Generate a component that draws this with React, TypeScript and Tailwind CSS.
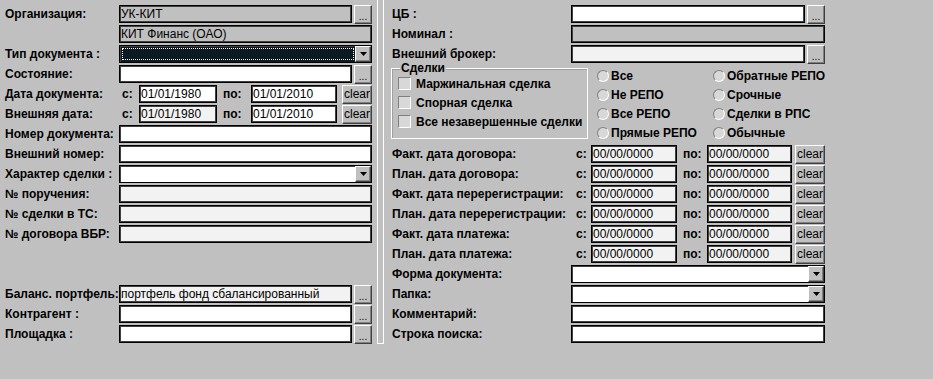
import type { ReactNode } from "react";

// серые поля/кнопки в стиле старого Windows-клиента
const FONT = "font-['Liberation_Sans',Arial,sans-serif]";

function Box({
  tone = "white",
  className = "",
  children,
}: {
  tone?: "white" | "light" | "gray";
  className?: string;
  children?: ReactNode;
}) {
  const bg =
    tone === "white" ? "bg-white" : tone === "light" ? "bg-[#f2f2f2]" : "bg-[#c0c0c0]";
  return (
    <div
      className={`flex h-[18px] shrink-0 items-center overflow-hidden whitespace-nowrap border border-black pl-[1px] text-[12px] leading-none shadow-[inset_1px_1px_0_#404040,inset_-1px_-1px_0_#404040] ${bg} ${className}`}
    >
      {children}
    </div>
  );
}

function Btn({ className = "", children }: { className?: string; children: ReactNode }) {
  return (
    <div
      className={`flex shrink-0 items-center justify-center border border-b-[#404040] border-l-white border-r-[#404040] border-t-white bg-[#c0c0c0] text-[12px] leading-none shadow-[inset_-1px_-1px_0_#808080] ${className}`}
    >
      {children}
    </div>
  );
}

function Dots() {
  return (
    <Btn className="ml-[2px] h-[19px] w-[18px]">
      <span className="pt-[5px] text-[10px]">...</span>
    </Btn>
  );
}

function Arrow() {
  return (
    <div className="flex h-[16px] w-[16px] items-center justify-center border border-b-[#404040] border-l-white border-r-[#404040] border-t-white bg-[#c0c0c0] shadow-[inset_-1px_-1px_0_#808080]">
      <svg width="7" height="4" viewBox="0 0 7 4">
        <path d="M0 0h7L3.5 4z" fill="#000" />
      </svg>
    </div>
  );
}

function Select({ dark = false, className = "" }: { dark?: boolean; className?: string }) {
  return (
    <div
      className={`flex h-[18px] shrink-0 items-center justify-between border border-black shadow-[inset_1px_1px_0_#404040] ${
        dark ? "bg-[#0b1a20]" : "bg-white"
      } ${className}`}
    >
      {dark ? (
        <div className="ml-[2px] mr-[1px] h-[12px] flex-1 border border-dotted border-white" />
      ) : (
        <div />
      )}
      <Arrow />
    </div>
  );
}

function Row({ label, lw, children }: { label: string; lw: string; children: ReactNode }) {
  return (
    <div className="flex h-[20px] items-center">
      <div className={`shrink-0 whitespace-nowrap text-[12px] font-bold leading-none ${lw}`}>
        {label}
      </div>
      {children}
    </div>
  );
}

function DateLeft({ label, from, fromTone }: { label: string; from: string; fromTone: "white" | "light" }) {
  return (
    <Row label={label} lw="w-[114px]">
      <span className="w-[20px] pl-[3px] text-[12px] font-bold">с:</span>
      <Box tone={fromTone} className="w-[78px]">
        {from}
      </Box>
      <span className="w-[34px] pl-[6px] text-[12px] font-bold">по:</span>
      <Box className="w-[86px]">01/01/2010</Box>
      <Btn className="ml-[5px] h-[19px] w-[30px]">clear</Btn>
    </Row>
  );
}

function DateRight({ label }: { label: string }) {
  return (
    <Row label={label} lw="w-[179px]">
      <span className="w-[20px] pl-[5px] text-[12px] font-bold">с:</span>
      <Box tone="light" className="w-[86px]">
        00/00/0000
      </Box>
      <span className="w-[30px] pl-[6px] text-[12px] font-bold">по:</span>
      <Box tone="light" className="w-[85px]">
        00/00/0000
      </Box>
      <Btn className="ml-[3px] h-[19px] w-[30px]">clear</Btn>
    </Row>
  );
}

function Check({ label }: { label: string }) {
  return (
    <div className="flex h-[19px] items-center">
      <div className="h-[13px] w-[13px] shrink-0 border border-b-white border-l-[#808080] border-r-white border-t-[#808080] bg-[#d8d8d8]" />
      <span className="ml-[5px] whitespace-nowrap text-[12px] font-bold leading-none">{label}</span>
    </div>
  );
}

function Radio({ label }: { label: string }) {
  return (
    <div className="flex h-[19px] items-center">
      <div className="h-[12px] w-[12px] shrink-0 rounded-full border border-b-white border-l-[#808080] border-r-white border-t-[#808080] bg-[#d8d8d8]" />
      <span className="ml-[2px] whitespace-nowrap text-[12px] font-bold leading-none">{label}</span>
    </div>
  );
}

export default function App() {
  return (
    <div className={`flex h-[379px] w-[933px] bg-[#c0c0c0] text-black ${FONT}`}>
      {/* левая колонка */}
      <div className="w-[373px] shrink-0 pl-[5px] pt-[4px]">
        <Row label="Организация:" lw="w-[114px]">
          <Box tone="gray" className="w-[233px]">
            УК-КИТ
          </Box>
          <Dots />
        </Row>
        <Row label="" lw="w-[114px]">
          <Box tone="gray" className="w-[253px]">
            КИТ Финанс (ОАО)
          </Box>
        </Row>
        <Row label="Тип документа :" lw="w-[114px]">
          <Select dark className="w-[253px]" />
        </Row>
        <Row label="Состояние:" lw="w-[114px]">
          <Box className="w-[233px]" />
          <Dots />
        </Row>
        <DateLeft label="Дата документа:" from="01/01/1980" fromTone="white" />
        <DateLeft label="Внешняя дата:" from="01/01/1980" fromTone="light" />
        <Row label="Номер документа:" lw="w-[114px]">
          <Box className="w-[253px]" />
        </Row>
        <Row label="Внешний номер:" lw="w-[114px]">
          <Box className="w-[253px]" />
        </Row>
        <Row label="Характер сделки :" lw="w-[114px]">
          <Select className="w-[253px]" />
        </Row>
        <Row label="№ поручения:" lw="w-[114px]">
          <Box tone="light" className="w-[253px]" />
        </Row>
        <Row label="№ сделки в ТС:" lw="w-[114px]">
          <Box tone="light" className="w-[253px]" />
        </Row>
        <Row label="№ договора ВБР:" lw="w-[114px]">
          <Box tone="light" className="w-[253px]" />
        </Row>
        <div className="h-[40px]" />
        <Row label="Баланс. портфель:" lw="w-[114px]">
          <Box tone="light" className="w-[233px]">
            портфель фонд сбалансированный
          </Box>
          <Dots />
        </Row>
        <Row label="Контрагент :" lw="w-[114px]">
          <Box className="w-[233px]" />
          <Dots />
        </Row>
        <Row label="Площадка :" lw="w-[114px]">
          <Box className="w-[233px]" />
          <Dots />
        </Row>
      </div>

      {/* разделитель */}
      <div className="ml-[4px] h-[344px] w-[7px] shrink-0 border-b border-l border-r border-white" />

      {/* правая колонка */}
      <div className="pl-[8px] pt-[4px]">
        <Row label="ЦБ :" lw="w-[179px]">
          <Box className="w-[234px]" />
          <Dots />
        </Row>
        <Row label="Номинал :" lw="w-[179px]">
          <Box tone="gray" className="w-[254px]" />
        </Row>
        <Row label="Внешний брокер:" lw="w-[179px]">
          <Box tone="light" className="w-[234px]" />
          <Dots />
        </Row>

        <div className="flex h-[80px]">
          <div className="relative mt-[4px] h-[71px] w-[197px] -ml-px border border-white shadow-[inset_1px_1px_0_#a0a0a0] pl-[6px] pt-[5px]">
            <span className="absolute -top-[7px] left-[8px] bg-[#c0c0c0] px-[1px] text-[12px] font-bold leading-none">
              Сделки
            </span>
            <Check label="Маржинальная сделка" />
            <Check label="Спорная сделка" />
            <Check label="Все незавершенные сделки" />
          </div>
          <div className="ml-[9px] w-[116px] pt-[2px]">
            <Radio label="Все" />
            <Radio label="Не РЕПО" />
            <Radio label="Все РЕПО" />
            <Radio label="Прямые РЕПО" />
          </div>
          <div className="pt-[2px]">
            <Radio label="Обратные РЕПО" />
            <Radio label="Срочные" />
            <Radio label="Сделки в РПС" />
            <Radio label="Обычные" />
          </div>
        </div>

        <DateRight label="Факт. дата договора:" />
        <DateRight label="План. дата договора:" />
        <DateRight label="Факт. дата перерегистрации:" />
        <DateRight label="План. дата перерегистрации:" />
        <DateRight label="Факт. дата платежа:" />
        <DateRight label="План. дата платежа:" />
        <Row label="Форма документа:" lw="w-[179px]">
          <Select className="w-[254px]" />
        </Row>
        <Row label="Папка:" lw="w-[179px]">
          <Select className="w-[254px]" />
        </Row>
        <Row label="Комментарий:" lw="w-[179px]">
          <Box className="w-[254px]" />
        </Row>
        <Row label="Строка поиска:" lw="w-[179px]">
          <Box className="w-[254px]" />
        </Row>
      </div>
    </div>
  );
}
